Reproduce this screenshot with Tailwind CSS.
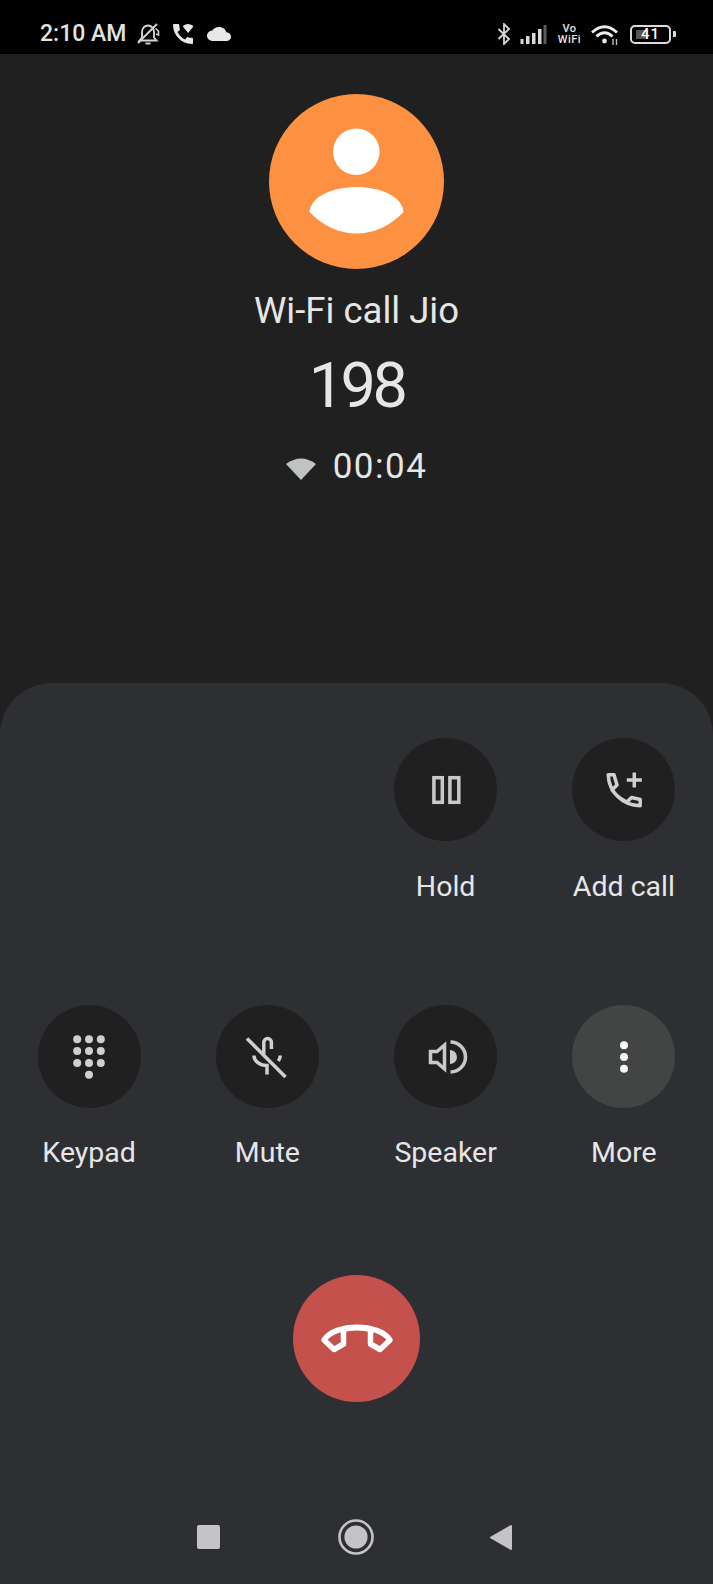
<!doctype html>
<html lang="en">
<head>
<meta charset="utf-8">
<title>Call</title>
<script src="https://cdn.jsdelivr.net/npm/@tailwindcss/browser@4"></script>
</head>
<body class="m-0 bg-[#202020]">
<div class="w-[713px] h-[1584px] flex flex-col overflow-hidden bg-[#202020] font-['Roboto',sans-serif] text-[#e6e6e6]">

  <!-- status bar -->
  <div class="h-[54px] shrink-0 bg-black flex items-center justify-between pl-[40px] pr-[37px] pt-[14px] text-[#e2e2e2]">
    <div class="flex items-center">
      <span class="text-[23px] leading-[24px] font-medium w-[85px] whitespace-nowrap">2:10 AM</span>
      <svg class="ml-[11px] w-[24px] h-[24px]" viewBox="0 0 24 24" fill="none" stroke="#d4d4d4" stroke-width="1.9"><path d="M3.5 18.5 L6 15.5 V10 C6 6.5 8.5 3.5 12 3.5 C15.5 3.5 18 6.5 18 10 V15.5 L20.5 18.5 Z"/><path d="M9.5 21.5 H14.5"/><path d="M2 21 L21 2"/><path d="M19.5 6.5 L22.5 9 V13 L20 12" stroke-width="1.6"/></svg>
      <svg class="ml-[13px] w-[20px] h-[20px]" viewBox="3 3 18 18" fill="#e8e8e8"><path d="M20.01 15.38c-1.23 0-2.42-.2-3.53-.56-.35-.12-.74-.03-1.01.24l-1.57 1.97c-2.83-1.35-5.48-3.9-6.89-6.83l1.95-1.66c.27-.28.35-.67.24-1.02-.37-1.11-.56-2.3-.56-3.53 0-.54-.45-.99-.99-.99H4.19C3.65 3 3 3.24 3 3.99 3 13.28 10.73 21 20.01 21c.71 0 .99-.63.99-1.18v-3.45c0-.54-.45-.99-.99-.99z"/><path d="M11.7 5 Q16.5 1 21.5 5 L16.6 11 Z"/></svg>
      <svg class="ml-[14px] w-[24px] h-[14px]" viewBox="0 4 24 16" preserveAspectRatio="none" fill="#e8e8e8"><path d="M19.35 10.04C18.67 6.59 15.64 4 12 4 9.11 4 6.6 5.64 5.35 8.04 2.34 8.36 0 10.91 0 14c0 3.31 2.69 6 6 6h13c2.76 0 5-2.24 5-5 0-2.64-2.05-4.78-4.65-4.96z"/></svg>
    </div>
    <div class="flex items-center">
      <svg class="w-[14px] h-[22px]" viewBox="0 0 14 22" fill="none" stroke="#d8d8d8" stroke-width="1.8"><path d="M1.5 6 L12 16 L7 21 V1 L12 6 L1.5 16"/></svg>
      <svg class="ml-[9px] w-[27px] h-[19px]" viewBox="0 0 27 19"><rect x="0.5" y="14" width="3" height="5" fill="#d8d8d8"/><rect x="6" y="11" width="3.5" height="8" fill="#d8d8d8"/><rect x="12" y="8" width="3.5" height="11" fill="#d8d8d8"/><rect x="18" y="4" width="3.5" height="15" fill="#d8d8d8"/><rect x="23.5" y="0" width="3" height="19" fill="#5c5c5c"/></svg>
      <div class="ml-[10px] w-[25px] flex flex-col items-center text-[11px] leading-[11px] font-medium tracking-[0.5px]"><span>Vo</span><span>WiFi</span></div>
      <svg class="ml-[9px] w-[28px] h-[21px]" viewBox="0 0 28 21" fill="none" stroke="#ececec" stroke-width="2.8"><path d="M1 8.5 Q13.5 -3 26 8.5"/><path d="M5.5 12.5 Q13.5 5 21.5 12.5"/><circle cx="13.5" cy="17" r="2.4" fill="#ececec" stroke="none"/><path d="M22 15 V21 M25.5 15 V21" stroke-width="1.4" stroke="#bbbbbb"/></svg>
      <div class="ml-[11px] flex items-center">
        <div class="relative w-[41px] h-[19px] rounded-[5px] border-2 border-[#dcdcdc] flex items-center justify-center">
          <div class="absolute left-[4px] top-[3px] w-[11px] h-[9px] bg-[#555555]"></div>
          <span class="relative text-[15px] leading-[15px] font-medium text-white tracking-[1px]">41</span>
        </div>
        <div class="ml-[2px] w-[3px] h-[6px] bg-[#dcdcdc] rounded-r-[1px]"></div>
      </div>
    </div>
  </div>

  <!-- caller -->
  <div class="flex-1 flex flex-col items-center pt-[40px]">
    <svg class="w-[175px] h-[175px] shrink-0" viewBox="0 0 175 175"><circle cx="87.5" cy="87.5" r="87.5" fill="#fd9141"/><circle cx="87.3" cy="57.7" r="23.3" fill="#fff"/><path d="M40.5 118 C42 102 64 93 87.5 93 C111 93 133 102 134.5 118 C121 132 105 139.5 87.5 139.5 C70 139.5 54 132 40.5 118 Z" fill="#fff"/></svg>
    <div class="mt-[21px] text-[36.5px] leading-[42px] whitespace-nowrap">Wi-Fi call Jio</div>
    <div class="mt-[19px] text-[63px] leading-[70px] tracking-[-3.5px] whitespace-nowrap">198</div>
    <div class="mt-[26px] flex items-center gap-[17px]">
      <svg class="w-[30px] h-[23px] mt-[3px]" viewBox="0 0 30 23" fill="#bfc3c3"><path d="M0 7 Q15 -4 30 7 L15 23 Z"/></svg>
      <span class="text-[35px] leading-[40px] tracking-[1.5px]">00:04</span>
    </div>
  </div>

  <!-- sheet -->
  <div class="h-[901px] shrink-0 bg-[#2e2f33] rounded-t-[52px] flex flex-col">
    <div class="grid grid-cols-4 pt-[55px]">
      <div></div><div></div>
      <div class="flex flex-col items-center">
        <div class="w-[103px] h-[103px] rounded-full bg-[#202020] flex items-center justify-center">
          <svg class="w-[52px] h-[52px]" viewBox="0 0 52 52" fill="none" stroke="#c9c9c9" stroke-width="3.5"><rect x="13.9" y="13.7" width="8.4" height="24.6"/><rect x="29.9" y="13.7" width="8.9" height="24.6"/></svg>
        </div>
        <span class="mt-[29px] text-[28.5px] leading-[34px] whitespace-nowrap">Hold</span>
      </div>
      <div class="flex flex-col items-center">
        <div class="w-[103px] h-[103px] rounded-full bg-[#202020] flex items-center justify-center">
          <svg class="w-[52px] h-[52px]" viewBox="0 0 52 52" fill="none" stroke="#d0d0d0" stroke-width="3.5" stroke-linejoin="round"><path d="M10.2 10.8 H16 L19 21 L14 26 Q20 34 29 38 L33.5 33.5 L42.2 35.5 V41.8 C24 41 11 28 10.2 10.8 Z"/><path d="M36.3 8.5 V23.5 M28.8 16 H43.8"/></svg>
        </div>
        <span class="mt-[29px] text-[28.5px] leading-[34px] whitespace-nowrap">Add call</span>
      </div>
    </div>

    <div class="grid grid-cols-4 mt-[101px]">
      <div class="flex flex-col items-center">
        <div class="w-[103px] h-[103px] rounded-full bg-[#202020] flex items-center justify-center">
          <svg class="w-[52px] h-[52px]" viewBox="0 0 52 52" fill="#cfcfcf"><circle cx="14.2" cy="8.3" r="4"/><circle cx="26" cy="8.3" r="4"/><circle cx="37.8" cy="8.3" r="4"/><circle cx="14.2" cy="20" r="4"/><circle cx="26" cy="20" r="4"/><circle cx="37.8" cy="20" r="4"/><circle cx="14.2" cy="32" r="4"/><circle cx="26" cy="32" r="4"/><circle cx="37.8" cy="32" r="4"/><circle cx="26" cy="43.7" r="4"/></svg>
        </div>
        <span class="mt-[28px] text-[28.5px] leading-[34px] whitespace-nowrap">Keypad</span>
      </div>
      <div class="flex flex-col items-center">
        <div class="w-[103px] h-[103px] rounded-full bg-[#202020] flex items-center justify-center">
          <svg class="w-[52px] h-[52px]" viewBox="0 0 52 52" fill="none" stroke="#d0d0d0" stroke-width="3.5"><path d="M22.8 23 V11.3 A3.8 3.8 0 0 1 30.4 11.3 V18"/><path d="M12.9 24.5 C13 30 19 34.5 26 34.5 V43.5"/><path d="M39.3 24.5 C39.2 26.5 38.5 28.3 37.3 30"/><path d="M6 7.5 L44.5 46"/></svg>
        </div>
        <span class="mt-[28px] text-[28.5px] leading-[34px] whitespace-nowrap">Mute</span>
      </div>
      <div class="flex flex-col items-center">
        <div class="w-[103px] h-[103px] rounded-full bg-[#202020] flex items-center justify-center">
          <svg class="w-[52px] h-[52px]" viewBox="0 0 52 52" fill="none" stroke="#c9c9c9" stroke-width="3.5"><path d="M10.5 20.5 H17 L24.5 14 V38 L17 31.5 H10.5 Z"/><path d="M30 19 A7 7 0 0 1 30 33 Z" fill="#c9c9c9" stroke="none"/><path d="M30.5 11 A15 15 0 0 1 30.5 41"/></svg>
        </div>
        <span class="mt-[28px] text-[28.5px] leading-[34px] whitespace-nowrap">Speaker</span>
      </div>
      <div class="flex flex-col items-center">
        <div class="w-[103px] h-[103px] rounded-full bg-[#434544] flex items-center justify-center">
          <svg class="w-[52px] h-[52px]" viewBox="0 0 52 52" fill="#f5f5f5"><circle cx="26" cy="14.3" r="4"/><circle cx="26" cy="26" r="4"/><circle cx="26" cy="37.7" r="4"/></svg>
        </div>
        <span class="mt-[28px] text-[28.5px] leading-[34px] whitespace-nowrap">More</span>
      </div>
    </div>

    <div class="mt-[105px] flex justify-center">
      <div class="w-[127px] h-[127px] rounded-full bg-[#c4514c] flex items-center justify-center">
        <svg class="w-[76px] h-[76px]" viewBox="0 0 76 76" fill="none" stroke="#ffffff" stroke-width="5.5" stroke-linejoin="round"><path d="M5 39 C16 22 60 22 71 39 L61 48.5 L51.5 43 V29 C46 26 30 26 24.5 29 V43 L15 48.5 Z"/></svg>
      </div>
    </div>

    <div class="mt-auto mb-[34px] h-[26px] flex items-center justify-center">
      <div class="w-[23px] h-[24px] rounded-[2px] bg-[#c4c4c6]"></div>
      <svg class="ml-[118px] w-[36px] h-[36px]" viewBox="0 0 36 36"><circle cx="18" cy="18" r="16.5" fill="none" stroke="#c4c4c6" stroke-width="2.6"/><circle cx="18" cy="18" r="11.6" fill="#c4c4c6"/></svg>
      <svg class="ml-[115px] mr-[3px] w-[24px] h-[27px]" viewBox="0 0 24 27" fill="#c4c4c6" stroke="#c4c4c6" stroke-width="2" stroke-linejoin="round"><path d="M2 13.5 L22 2 V25 Z"/></svg>
    </div>
  </div>
</div>
</body>
</html>
